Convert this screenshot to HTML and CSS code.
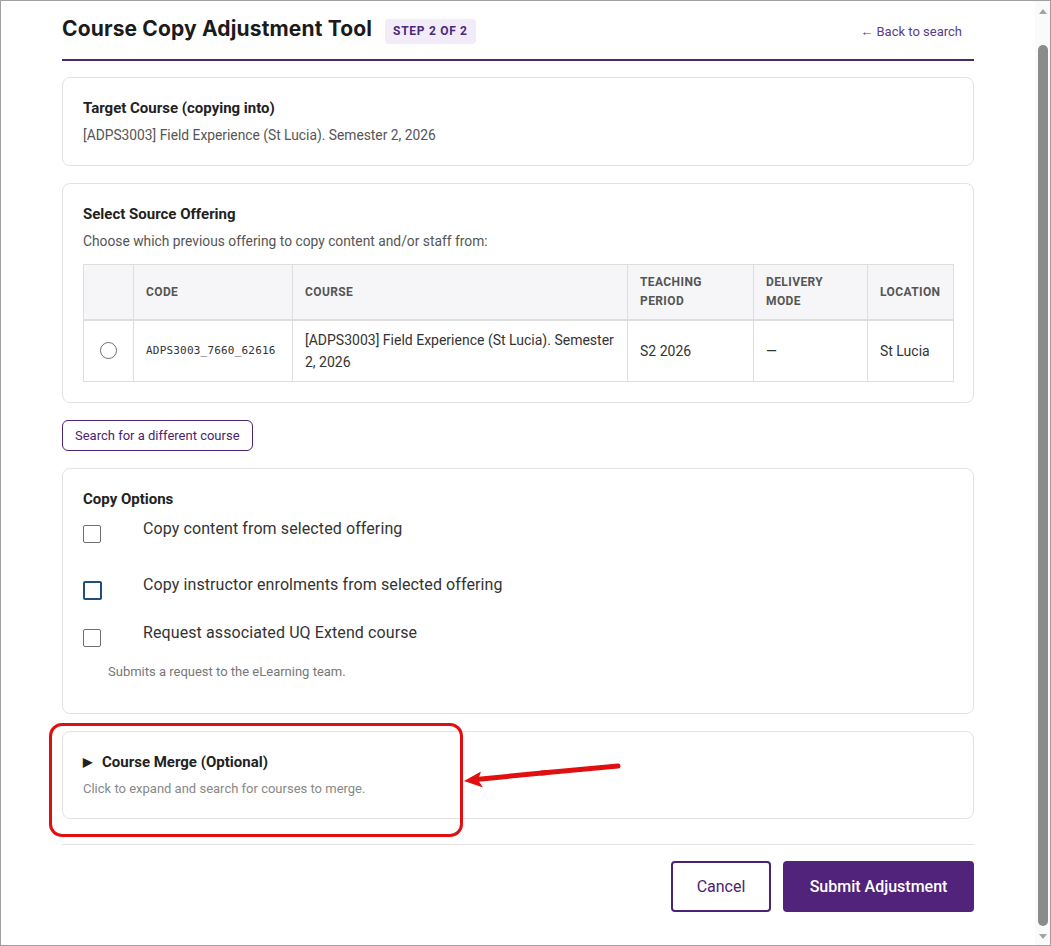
FILE: index.html
```html
<!DOCTYPE html>
<html>
  <head>
    <meta charset="UTF-8">
    <title>Course Copy Adjustment Tool</title>
    <link rel="stylesheet" href="styles.css">
  </head>
  <body>
<div class="window">
  <div class="viewport">
    <main class="page">

      <div class="page-head">
        <div class="head-left">
          <h1>Course Copy Adjustment Tool</h1>
          <span class="badge">Step 2 of 2</span>
        </div>
        <a href="#" class="back-link">&larr; Back to search</a>
      </div>

      <!-- target course -->
      <section class="card">
        <h2 class="card-title">Target Course (copying into)</h2>
        <p class="card-text">[ADPS3003] Field Experience (St Lucia). Semester 2, 2026</p>
      </section>

      <!-- source offering -->
      <section class="card">
        <h2 class="card-title">Select Source Offering</h2>
        <p class="card-text">Choose which previous offering to copy content and/or staff from:</p>
        <table class="offerings">
          <colgroup>
            <col class="c-pick"><col class="c-code"><col class="c-course"><col class="c-period"><col class="c-mode"><col class="c-loc">
          </colgroup>
          <thead>
            <tr>
              <th></th>
              <th>Code</th>
              <th>Course</th>
              <th>Teaching Period</th>
              <th>Delivery Mode</th>
              <th>Location</th>
            </tr>
          </thead>
          <tbody>
            <tr>
              <td class="pick"><input type="radio" name="source"></td>
              <td class="code">ADPS3003_7660_62616</td>
              <td>[ADPS3003] Field Experience (St Lucia). Semester 2, 2026</td>
              <td>S2 2026</td>
              <td>&mdash;</td>
              <td>St Lucia</td>
            </tr>
          </tbody>
        </table>
      </section>

      <button class="btn-outline-sm">Search for a different course</button>

      <!-- copy options -->
      <section class="card options-card">
        <h2 class="card-title">Copy Options</h2>
        <label class="option">
          <input type="checkbox">
          <span>Copy content from selected offering</span>
        </label>
        <label class="option">
          <input type="checkbox" class="focused">
          <span>Copy instructor enrolments from selected offering</span>
        </label>
        <label class="option">
          <input type="checkbox">
          <span>Request associated UQ Extend course</span>
        </label>
        <p class="hint">Submits a request to the eLearning team.</p>
      </section>

      <!-- merge -->
      <section class="card merge-card">
        <h2 class="card-title"><span class="caret">&#9654;</span>Course Merge (Optional)</h2>
        <p class="card-sub">Click to expand and search for courses to merge.</p>

        <div class="callout"></div>
        <svg class="callout-arrow" width="170" height="40" viewBox="0 0 170 40">
          <line x1="156" y1="8" x2="80" y2="15" stroke="#e01010" stroke-width="5" stroke-linecap="round"/>
          <line x1="85" y1="14.5" x2="14" y2="21.5" stroke="#e01010" stroke-width="5"/>
          <polygon points="2,23 19,13.5 16,22 21,29.5" fill="#e01010"/>
        </svg>
      </section>

      <div class="actions">
        <button class="btn btn-cancel">Cancel</button>
        <button class="btn btn-submit">Submit Adjustment</button>
      </div>

    </main>
  </div>

  <div class="scrollbar">
    <span class="arrow-up"></span>
    <span class="thumb"></span>
    <span class="arrow-down"></span>
  </div>
</div>
  </body>
</html>
```

FILE: styles.css
```css
*, ::after, ::before {
    box-sizing: border-box;
}

html, body {
    margin: 0;
    padding: 0;
    background: #fff;
    font-family: Roboto, "Liberation Sans", Arial, sans-serif;
    color: #333;
}

.window {
    display: flex;
    width: 1051px;
    height: 946px;
    border: 1px solid #a0a0a0;
    overflow: hidden;
}

.viewport {
    flex: 1;
    overflow: hidden;
}

.page {
    max-width: 912px;
    margin: 0 auto;
    padding-top: 15px;
}

/* header */
.page-head {
    display: flex;
    justify-content: space-between;
    align-items: flex-start;
    height: 30px;
    box-sizing: content-box;
    padding-bottom: 13px;
    border-bottom: 2px solid #4a2a68;
    margin-bottom: 16px;
}

.head-left {
    display: flex;
    align-items: flex-start;
    gap: 13px;
}

h1 {
    margin: 0;
    font-family: Inter, "Open Sans", sans-serif;
    font-size: 21px;
    line-height: 26px;
    font-weight: 700;
    color: #1b1b1b;
    letter-spacing: 0.15px;
}

.badge {
    display: inline-block;
    height: 25px;
    line-height: 25px;
    margin-top: 3px;
    padding: 0 8px;
    background: #f1ecf8;
    color: #4b2a7b;
    border-radius: 4px;
    font-size: 12px;
    font-weight: 700;
    text-transform: uppercase;
    letter-spacing: 0.7px;
}

.back-link {
    margin-top: 3px;
    line-height: 25px;
    color: #5b3c88;
    font-size: 13px;
    text-decoration: none;
    padding-right: 12px;
}

/* cards */
.card {
    border: 1px solid #e2e2e2;
    border-radius: 8px;
    padding: 20px;
    margin-bottom: 17px;
    background: #fff;
}

.card-title {
    margin: 0;
    font-size: 15px;
    line-height: 21px;
    font-weight: 700;
    color: #222;
}

.card-text {
    margin: 6px 0 0;
    font-size: 13.8px;
    line-height: 20px;
    color: #555;
}

/* offerings table */
.offerings {
    width: 100%;
    margin-top: 13px;
    border-collapse: collapse;
    table-layout: fixed;
    font-size: 14px;
}

.c-pick { width: 50px; }
.c-code { width: 159px; }
.c-course { width: 335px; }
.c-period { width: 126px; }
.c-mode { width: 114px; }
.c-loc { width: 86px; }

.offerings th {
    background: #f6f6f9;
    color: #555;
    font-size: 12px;
    font-weight: 700;
    line-height: 19px;
    text-transform: uppercase;
    letter-spacing: 0.4px;
    text-align: left;
    padding: 8px 12px;
    height: 55px;
    border: 1px solid #dedede;
    border-bottom: 2px solid #dedede;
}

.offerings td {
    padding: 8px 12px;
    line-height: 22px;
    color: #333;
    border: 1px solid #dedede;
    vertical-align: middle;
}

.offerings td.pick {
    text-align: center;
    padding: 0;
}

.offerings td.code {
    font-family: "DejaVu Sans Mono", "Liberation Mono", monospace;
    font-size: 11px;
    letter-spacing: 0.2px;
}

input[type=radio] {
    -webkit-appearance: none;
    appearance: none;
    width: 17px;
    height: 17px;
    margin: 4px 0 0;
    border: 1px solid #6f6f6f;
    border-radius: 50%;
    background: #fff;
}

.btn-outline-sm {
    display: block;
    height: 31px;
    padding: 0 12px;
    margin-bottom: 17px;
    font-family: inherit;
    font-size: 13px;
    color: #4a2470;
    background: #fff;
    border: 1px solid #4a2470;
    border-radius: 6px;
    cursor: pointer;
}

/* copy options */
.options-card .card-title {
    margin-bottom: 7px;
}

.option {
    display: flex;
    align-items: flex-start;
    font-size: 16px;
    line-height: 24px;
    color: #333;
    letter-spacing: 0.1px;
}

.option:nth-of-type(1) {
    margin-bottom: 30px;
}

.option:nth-of-type(2) {
    margin-bottom: 21px;
}

.option input[type=checkbox] {
    -webkit-appearance: none;
    appearance: none;
    flex: none;
    width: 18px;
    height: 18px;
    margin: 8px 42px 0 0;
    border: 1px solid #707070;
    border-radius: 2px;
    background: #fff;
}

.option input.focused {
    width: 19px;
    height: 19px;
    margin-right: 41px;
    border: 2px solid #1f4f80;
}

.hint {
    margin: 16px 0 12px 25px;
    font-size: 13px;
    line-height: 18px;
    color: #777;
}

/* merge */
.merge-card {
    position: relative;
    margin-bottom: 25px;
}

.caret {
    display: inline-block;
    font-size: 12px;
    width: 19px;
    vertical-align: 1px;
    color: #222;
}

.card-sub {
    margin: 7px 0 0;
    font-size: 13px;
    line-height: 18px;
    color: #888;
}

.callout {
    position: absolute;
    left: -14px;
    top: -9px;
    width: 414px;
    height: 114px;
    border: 3px solid #e01010;
    border-radius: 13px;
}

.callout-arrow {
    position: absolute;
    left: 399px;
    top: 26px;
}

/* footer buttons */
.actions {
    display: flex;
    justify-content: flex-end;
    gap: 12px;
    padding-top: 16px;
    border-top: 1px solid #e2e2e2;
}

.btn {
    height: 51px;
    font-family: inherit;
    font-size: 16px;
    border-radius: 4px;
    cursor: pointer;
}

.btn-cancel {
    width: 100px;
    color: #4a2470;
    background: #fff;
    border: 2px solid #4a2470;
}

.btn-submit {
    width: 191px;
    color: #fff;
    font-weight: 500;
    background: #51237a;
    border: none;
}

/* fake scrollbar */
.scrollbar {
    flex: none;
    width: 15px;
    display: flex;
    flex-direction: column;
    align-items: center;
    background: #fafafa;
    padding: 8px 0 6px;
}

.arrow-up, .arrow-down {
    width: 0;
    height: 0;
    border-left: 4px solid transparent;
    border-right: 4px solid transparent;
}

.arrow-up {
    border-bottom: 5px solid #a3a3a3;
}

.arrow-down {
    border-top: 5px solid #a3a3a3;
}

.thumb {
    flex: 1;
    width: 10px;
    margin: 31px 0 8px;
    background: #8b8b8b;
    border-radius: 5px;
}
```
